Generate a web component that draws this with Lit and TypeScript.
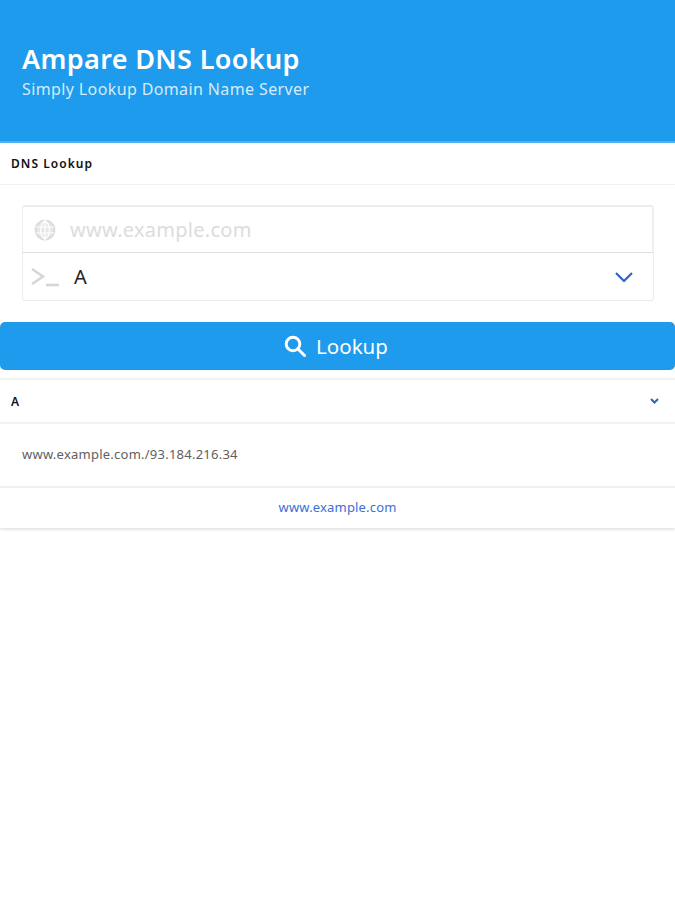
import { LitElement, html, css } from "lit";
import { customElement } from "lit/decorators.js";

@customElement("app-root")
export class AppRoot extends LitElement {
  static styles = css`
    :host { display: block; min-height: 900px; background: #fff; font-family: "Noto Sans", "Open Sans", sans-serif; color: #111; }
    .hero { box-sizing: border-box; background: #1e9bec; border-bottom: 2px solid #4fb0f0; padding: 41px 22px 0; color: #fff; height: 143px; }
    .hero h1 { margin: 0; font-size: 27px; line-height: 36px; font-weight: 600; letter-spacing: 0.35px; }
    .hero p { margin: 0; font-size: 16px; line-height: 24px; color: #d4ecfb; letter-spacing: 0.38px; }
    .card-head { height: 42px; display: flex; align-items: center; padding: 0 11px; font-size: 12px; font-weight: 600; letter-spacing: 1.05px; border-bottom: 1px solid #f0f0f0; box-sizing: border-box; justify-content: space-between; }
    .form { padding: 20px 21px 21px 22px; }
    .field { height: 48px; box-sizing: border-box; border: 1px solid #ececec; display: flex; align-items: center; font-size: 20px; }
    .field.top { border-width: 2px 2px 1px 1px; border-color: #ececec #eeeeee #dedede #eeeeee; border-radius: 3px 3px 0 0; padding-left: 11px; color: #dcdcdc; gap: 14px; letter-spacing: 0.27px; }
    .field.bottom { border-top: 0; border-radius: 0 0 3px 3px; padding-left: 8px; padding-right: 19px; }
    .field.bottom .val { flex: 1; margin-left: 15px; color: #222; font-size: 20px; }
    .btn { height: 48px; box-sizing: border-box; padding-right: 3px; background: #1e9bec; border-radius: 5px; color: #fff; display: flex; align-items: center; justify-content: center; gap: 10px; font-size: 20.5px; }
    .result { margin-top: 8px; border-top: 2px solid #f2f2f2; box-shadow: 0 2px 2px #e6e6e6; }
    .result .card-head { height: 44px; border-bottom: 2px solid #f2f2f2; padding-right: 16px; }
    .row { height: 64px; box-sizing: border-box; display: flex; align-items: center; padding: 0 22px 3px; font-size: 13px; letter-spacing: 0.24px; color: #606060; border-bottom: 2px solid #f0f0f0; }
    .foot { height: 40px; box-sizing: border-box; padding-bottom: 2px; display: flex; align-items: center; justify-content: center; font-size: 13px; letter-spacing: 0.17px; color: #3a6fd8; }
    svg { display: block; flex: none; }
  `;

  render() {
    return html`
      <div class="hero">
        <h1>Ampare DNS Lookup</h1>
        <p>Simply Lookup Domain Name Server</p>
      </div>
      <div class="card-head">DNS Lookup</div>
      <div class="form">
        <div class="field top">
          <svg width="22" height="22" viewBox="0 0 22 22" fill="none" stroke="#dcdcdc" stroke-width="2">
            <circle cx="11" cy="11" r="9.5" fill="#e6e6e6" stroke="#dcdcdc"></circle>
            <path d="M2 8h18M2 14h18M11 1.5v19M11 1.5c-6 5-6 14 0 19M11 1.5c6 5 6 14 0 19" stroke="#fff" stroke-width="1.2"></path>
          </svg>
          <span>www.example.com</span>
        </div>
        <div class="field bottom">
          <svg width="28" height="20" viewBox="0 0 28 20" fill="none" stroke="#d6d6d6" stroke-width="2.6">
            <path d="M1 2l11 7.5L1 17"></path><path d="M15 18h13"></path>
          </svg>
          <span class="val">A</span>
          <svg width="20" height="12" viewBox="0 0 20 12" fill="none" stroke="#2f62c9" stroke-width="2.2">
            <path d="M2 2l8 8 8-8"></path>
          </svg>
        </div>
      </div>
      <div class="btn">
        <svg width="22" height="22" viewBox="0 0 22 22" fill="none" stroke="#fff" stroke-width="3">
          <circle cx="9" cy="9" r="6.8"></circle><path d="M14 14l6.5 6.5" stroke-linecap="round"></path>
        </svg>
        <span>Lookup</span>
      </div>
      <div class="result">
        <div class="card-head">A
          <svg width="9" height="6" viewBox="0 0 9 6" fill="none" stroke="#2f62c9" stroke-width="2"><path d="M1 1l3.5 3.5L8 1"></path></svg>
        </div>
        <div class="row">www.example.com./93.184.216.34</div>
        <div class="foot">www.example.com</div>
      </div>
    `;
  }
}
